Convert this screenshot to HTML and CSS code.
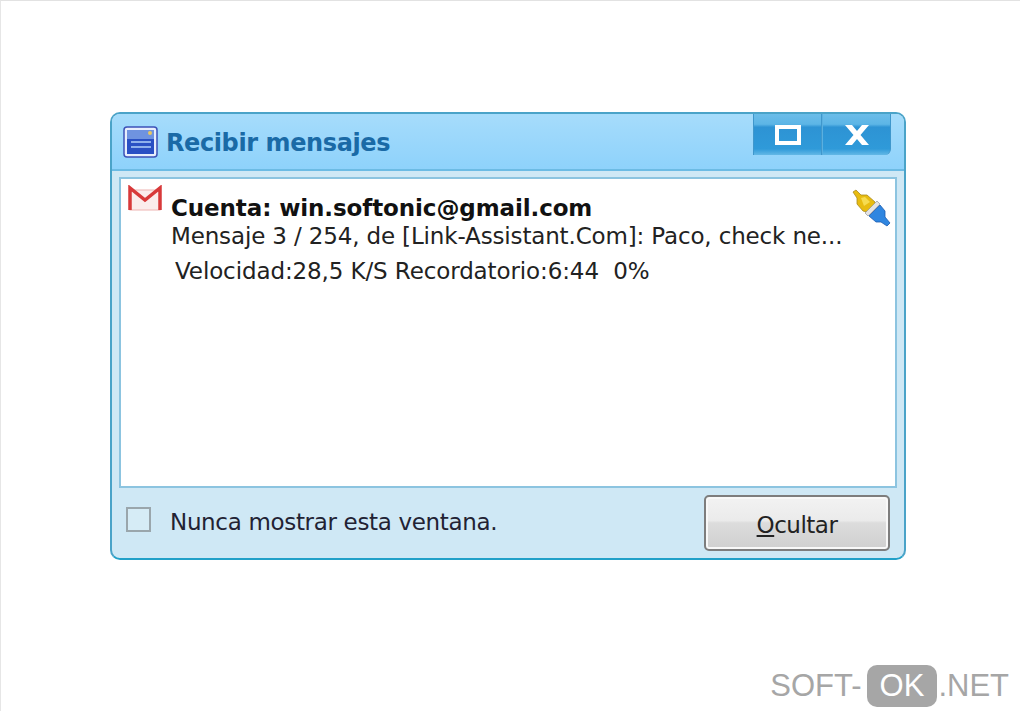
FILE: index.html
```html
<!DOCTYPE html>
<html lang="es">
<head>
  <meta charset="UTF-8" />
  <title>Recibir mensajes</title>
  <link rel="stylesheet" href="styles.css">
</head>
<body>

  <div class="window">
    <div class="titlebar">
      <svg class="app-icon" width="36" height="32" viewBox="0 0 36 32">
        <rect x="1" y="1" width="33" height="30" rx="3" fill="#e8eefc" stroke="#3c52b8" stroke-width="1.5"/>
        <rect x="4" y="4" width="27" height="24" fill="#2a50c4"/>
        <rect x="4" y="4" width="27" height="9" fill="#6f93e0"/>
        <rect x="8" y="15" width="20" height="2" fill="#8fb0ec"/>
        <rect x="8" y="20" width="20" height="2" fill="#8fb0ec"/>
        <circle cx="27" cy="7" r="2" fill="#e8c860"/>
      </svg>
      <span class="title">Recibir mensajes</span>
      <div class="controls">
        <div class="ctl">
          <svg width="26" height="20" viewBox="0 0 26 20"><rect x="2" y="2" width="22" height="16" fill="none" stroke="#fff" stroke-width="4"/></svg>
        </div>
        <div class="ctl">
          <svg width="24" height="20" viewBox="0 0 24 20"><path d="M0 0 H7 L12 6 L17 0 H24 L15.500 10 L24 20 H17 L12 14 L7 20 H0 L8.500 10 Z" fill="#fff"/></svg>
        </div>
      </div>
    </div>

    <div class="panel">
      <svg class="gmail" width="36" height="26" viewBox="0 0 36 26">
        <rect x="3" y="5" width="30" height="20" fill="#fbecec" stroke="#eeb4b2" stroke-width="1"/>
        <path d="M3 25 V3 L18 15 L33 3 V25" fill="none" stroke="#d8393a" stroke-width="3.500"/>
      </svg>
      <div class="lines">
        <div class="account">Cuenta: win.softonic@gmail.com</div>
        <div class="subject">Mensaje 3 / 254, de [Link-Assistant.Com]: Paco, check ne...</div>
        <div class="speed">Velocidad:28,5 K/S Recordatorio:6:44&nbsp; 0%</div>
      </div>
      <svg class="plug" width="40" height="38" viewBox="0 0 40 38">
        <path d="M1 3 L4 1 L9 6 L15 6 L23 13 L23 16 L15 23 L11 22 L5 15 L5 9 Z" fill="#e8bc10" stroke="#a88a20" stroke-width="0.8"/>
        <path d="M9 9 L13 8 L18 13 L12 17 Z" fill="#f6dc50"/>
        <path d="M13 24 L25 12 L28 15 L16 27 Z" fill="#e4e4e4" stroke="#8a8a8a" stroke-width="0.6"/>
        <path d="M28 16 L33 22 L33 28 L38 34 L35 37 L29 33 L24 33 L17 27 Z" fill="#2f86e0" stroke="#1c5cb0" stroke-width="0.8"/>
      </svg>
    </div>

    <div class="footer">
      <label class="check"><span class="box"></span><span class="check-text">Nunca mostrar esta ventana.</span></label>
      <button class="hide-btn" type="button"><u>O</u>cultar</button>
    </div>
  </div>

  <div class="brand">SOFT-<span class="ok">OK</span>.NET</div>

</body>
</html>
```

FILE: styles.css
```css
html, body {
  height: 100%;
}

body {
  margin: 0;
  box-sizing: border-box;
  height: 711px;
  overflow: hidden;
  background: #fff;
  border-top: 1px solid #e2e2e2;
  border-left: 1px solid #e6e6e6;
  font-family: 'DejaVu Sans', 'Liberation Sans', sans-serif;
  color: #222;
  padding: 111px 0 0 109px;
  position: relative;
}

.window {
  width: 796px;
  height: 448px;
  box-sizing: border-box;
  border: 2px solid #4aa3c8;
  border-bottom-color: #22a0c8;
  border-radius: 10px;
  background: #cfe8f5;
  display: flex;
  flex-direction: column;
  padding: 0 7px;
}

.titlebar {
  height: 55px;
  margin: 0 -7px;
  padding: 0 13px 0 11px;
  background: linear-gradient(#a6dcfb, #8ed2fb);
  border-radius: 8px 8px 0 0;
  border-bottom: 2px solid #6cbbe4;
  display: flex;
  align-items: center;
  gap: 7px;
}

.app-icon {
  flex: none;
}

.title {
  font-size: 24px;
  font-weight: 700;
  color: #1a6aa6;
  letter-spacing: -0.4px;
  padding-top: 3px;
}

.controls {
  margin-left: auto;
  align-self: flex-start;
  display: flex;
  height: 41px;
}

.ctl {
  width: 67px;
  display: flex;
  align-items: center;
  justify-content: center;
  background: linear-gradient(#6bbde9 0, #5cb5e6 25%, #2d93d4 32%, #2f9ad9 85%, #63b8e6 100%);
  border-right: 1px solid #3f97cc;
  border-left: 1px solid #3f97cc;
}

.ctl + .ctl {
  border-left: 1px solid #5ab0e0;
  border-radius: 0 0 6px 0;
}

.panel {
  height: 311px;
  margin-top: 6px;
  box-sizing: border-box;
  background: #fff;
  border: 2px solid #8cc4e0;
  display: flex;
  padding: 6px 4px 0 6px;
  position: relative;
}

.gmail {
  flex: none;
}

.lines {
  margin-left: 8px;
  padding-top: 9px;
}

.account {
  font-size: 23px;
  font-weight: 700;
  line-height: 28px;
  letter-spacing: -0.1px;
  color: #111;
}

.subject {
  font-size: 23px;
  line-height: 28px;
  letter-spacing: -0.15px;
  white-space: nowrap;
}

.speed {
  font-size: 23px;
  line-height: 28px;
  letter-spacing: -0.11px;
  margin: 7px 0 0 4px;
  white-space: nowrap;
}

.plug {
  position: absolute;
  top: 10px;
  right: 3px;
}

.footer {
  flex: 1;
  display: flex;
  align-items: center;
  justify-content: space-between;
  padding: 0 7px 0 7px;
  background: #cfe8f5;
}

.check {
  display: flex;
  align-items: center;
  gap: 19px;
  font-size: 23px;
  letter-spacing: -0.33px;
  color: #223;
  padding-bottom: 6px;
}

.check-text {
  padding-top: 3px;
}

.box {
  width: 21px;
  height: 21px;
  border: 2px solid #9aa6ac;
  background: #d6ecf6;
  margin-bottom: 2px;
}

.hide-btn {
  width: 186px;
  height: 56px;
  box-sizing: border-box;
  border: 2px solid #7d7d7d;
  border-radius: 5px;
  background: linear-gradient(#f2f2f2 0, #ebebeb 45%, #dcdcdc 50%, #cfcfcf 100%);
  box-shadow: inset 0 0 0 2px #f8f8f8;
  font-family: inherit;
  font-size: 23px;
  letter-spacing: -0.5px;
  padding-top: 5px;
  color: #222;
}

.brand {
  position: absolute;
  right: 11px;
  bottom: 4px;
  display: flex;
  align-items: center;
  font-family: 'Liberation Sans', sans-serif;
  font-size: 31px;
  color: #a6a6a6;
}

.ok {
  background: #a6a6a6;
  color: #fff;
  border-radius: 10px;
  padding: 3px 13px;
  margin: 0 1px 0 5px;
}
```
